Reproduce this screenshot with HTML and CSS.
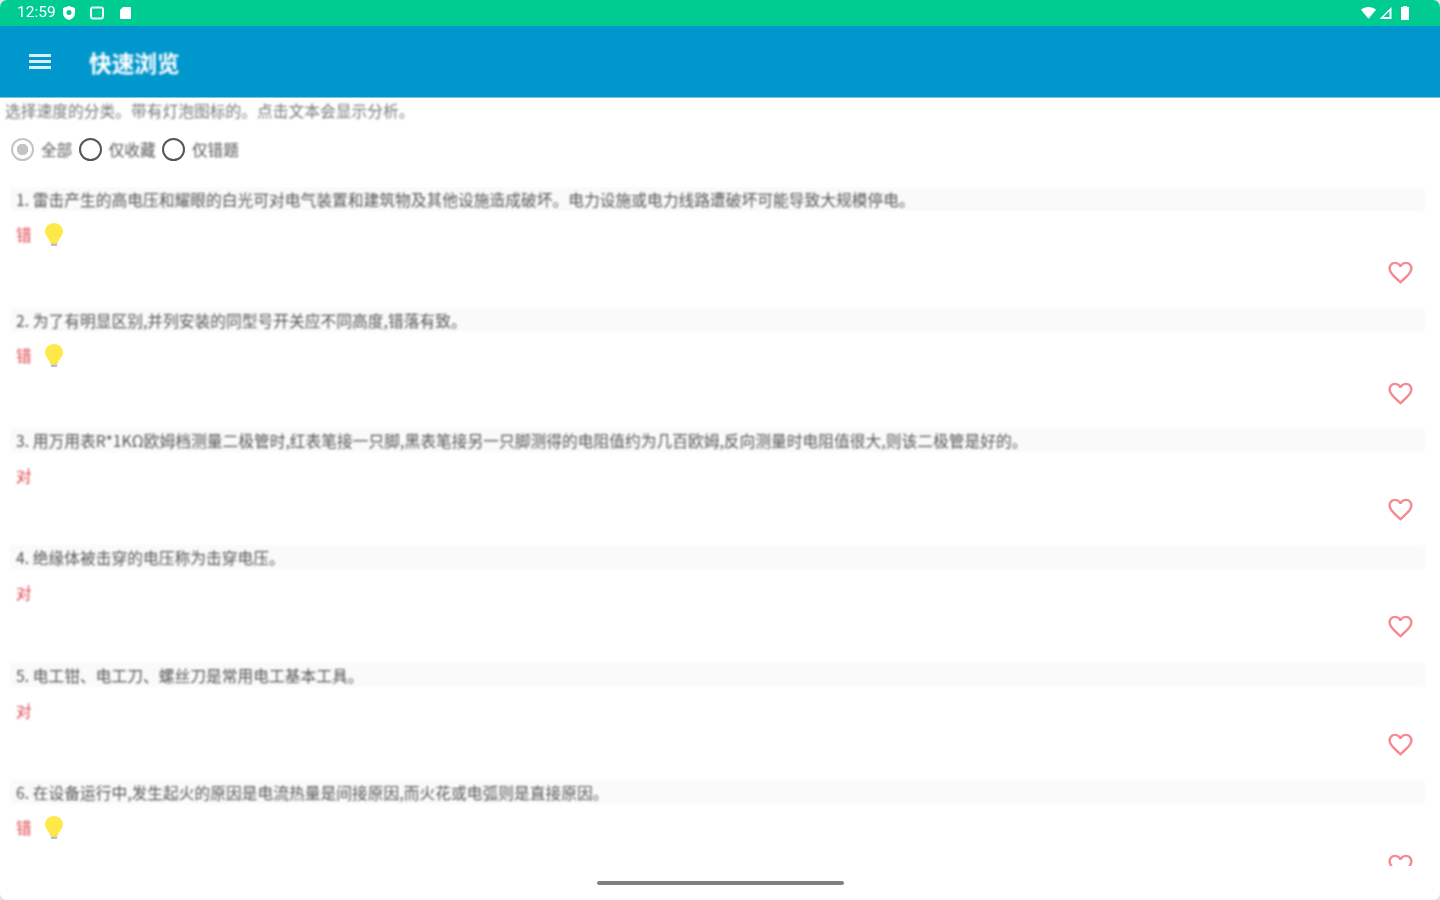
FILE: index.html
```html
<!DOCTYPE html>
<html lang="zh-CN">
<head>
<meta charset="utf-8">
<title>快速浏览</title>
<link rel="stylesheet" href="styles.css">
</head>
<body>
<svg class="defs" width="0" height="0" aria-hidden="true">
  <defs>
    <symbol id="heart" viewBox="0 0 24 24"><path d="M16.5 3c-1.74 0-3.41.81-4.5 2.09C10.91 3.81 9.24 3 7.5 3 4.42 3 2 5.42 2 8.5c0 3.78 3.4 6.86 8.55 11.54L12 21.35l1.45-1.32C18.6 15.36 22 12.28 22 8.5 22 5.42 19.58 3 16.5 3zm-4.4 15.55l-.1.1-.1-.1C7.14 14.24 4 11.39 4 8.5 4 6.5 5.5 5 7.5 5c1.54 0 3.04.99 3.57 2.36h1.87C13.46 5.99 14.96 5 16.5 5c2 0 3.5 1.5 3.5 3.5 0 2.89-3.14 5.74-7.9 10.05z"/></symbol>
    <symbol id="bulb" viewBox="0 0 18 24"><path class="bulb-base" d="M6 20h6v3H6z"/><path class="bulb-glass" d="M9 0C4 0 0 3.8 0 8.6c0 3.6 2.4 5.4 3.8 7.6.8 1.300 1.200 2.800 1.700 4.300h7c.5-1.500.9-3 1.700-4.300C15.600 14 18 12.200 18 8.600 18 3.800 14 0 9 0z"/></symbol>
  </defs>
</svg>
<div class="screen">
  <header class="status">
    <div class="status-left">
      <span class="clock">12:59</span>
      <svg class="si" viewBox="0 0 16 16"><path class="white" d="M8 1l6 2v5c0 3.500-2.500 6-6 7-3.500-1-6-3.500-6-7V3z"/><circle class="green" cx="8" cy="7.500" r="2.500"/></svg>
      <svg class="si si-gap" viewBox="0 0 16 16"><rect class="ring" x="2" y="2.500" width="12" height="11" rx="2"/></svg>
      <svg class="si si-gap" viewBox="0 0 16 16"><path class="white" d="M6 2h7a1 1 0 0 1 1 1v10a1 1 0 0 1-1 1H4a1 1 0 0 1-1-1V5z"/></svg>
    </div>
    <div class="status-right">
      <svg class="sr" viewBox="0 0 16 14"><path class="white" d="M0 3.500C4.500-.5 11.500-.5 16 3.500L8 13z"/></svg>
      <svg class="sr" viewBox="0 0 14 14"><path class="white" d="M13 1v12H1zM11 5l-6 6h6z"/></svg>
      <svg class="batt" viewBox="0 0 10 14"><path class="white" d="M3 0h4v1h2v13H1V1h2z"/></svg>
    </div>
  </header>
  <div class="toolbar">
    <svg class="menu" viewBox="0 0 22 18"><path class="white" d="M0 1h22v3H0zM0 7h22v3H0zM0 13h22v3H0z"/></svg>
    <h1 class="title">快速浏览</h1>
  </div>
  <main class="content">
    <p class="intro">选择速度的分类。带有灯泡图标的。点击文本会显示分析。</p>
    <div class="radios">
      <span class="radio radio-on"></span><span class="radio-label">全部</span>
      <span class="radio"></span><span class="radio-label">仅收藏</span>
      <span class="radio"></span><span class="radio-label">仅错题</span>
    </div>
    <div class="list">
      <article class="item item-bulb">
        <p class="q">1. 雷击产生的高电压和耀眼的白光可对电气装置和建筑物及其他设施造成破坏。电力设施或电力线路遭破坏可能导致大规模停电。</p>
        <div class="a"><span class="ans">错</span><svg class="bulb"><use href="#bulb"/></svg></div>
        <svg class="heart"><use href="#heart"/></svg>
      </article>
      <article class="item item-bulb">
        <p class="q">2. 为了有明显区别,并列安装的同型号开关应不同高度,错落有致。</p>
        <div class="a"><span class="ans">错</span><svg class="bulb"><use href="#bulb"/></svg></div>
        <svg class="heart"><use href="#heart"/></svg>
      </article>
      <article class="item">
        <p class="q">3. 用万用表R*1KΩ欧姆档测量二极管时,红表笔接一只脚,黑表笔接另一只脚测得的电阻值约为几百欧姆,反向测量时电阻值很大,则该二极管是好的。</p>
        <div class="a"><span class="ans">对</span></div>
        <svg class="heart"><use href="#heart"/></svg>
      </article>
      <article class="item">
        <p class="q">4. 绝缘体被击穿的电压称为击穿电压。</p>
        <div class="a"><span class="ans">对</span></div>
        <svg class="heart"><use href="#heart"/></svg>
      </article>
      <article class="item">
        <p class="q">5. 电工钳、电工刀、螺丝刀是常用电工基本工具。</p>
        <div class="a"><span class="ans">对</span></div>
        <svg class="heart"><use href="#heart"/></svg>
      </article>
      <article class="item item-bulb">
        <p class="q">6. 在设备运行中,发生起火的原因是电流热量是间接原因,而火花或电弧则是直接原因。</p>
        <div class="a"><span class="ans">错</span><svg class="bulb"><use href="#bulb"/></svg></div>
        <svg class="heart"><use href="#heart"/></svg>
      </article>
    </div>
  </main>
  <footer class="nav"><span class="home"></span></footer>
</div>
</body>
</html>
```
FILE: styles.css
```css
* { box-sizing: border-box; }
html, body { margin: 0; height: 100%; overflow: hidden; background: #e4e4e4; }
body { font-family: "Noto Sans CJK SC", "Noto Sans", sans-serif; color: #333; }
p, h1 { margin: 0; font-weight: 400; }
.defs { display: block; height: 0; }

.screen { width: 1440px; height: 900px; display: flex; flex-direction: column; background: #fff; overflow: hidden; border-radius: 7px; }

.status { height: 26px; flex: none; background: #00cc92; display: flex; justify-content: space-between; align-items: center; padding: 0 30px 0 17px; }
.status-left, .status-right { display: flex; align-items: center; filter: blur(.7px); }
.clock { font: 15.500px/1 Roboto, sans-serif; color: #fff; margin-right: 5px; }
.si { width: 16px; height: 16px; display: block; }
.si-gap { margin-left: 12px; }
.sr { width: 15px; height: 14px; margin-right: 2px; display: block; }
.batt { width: 10px; height: 14px; margin-left: 5px; display: block; }
.white { fill: #fff; }
.green { fill: #00cc92; }
.ring { fill: none; stroke: #e6fbf3; stroke-width: 2; }

.toolbar { height: 72px; flex: none; background: #0097cc; display: flex; align-items: center; padding: 0 0 0 29px; border-bottom: 1px solid #7cc5e4; }
.menu { width: 22px; height: 18px; display: block; margin-top: 1px; filter: blur(.6px); opacity: .85; }
.title { font-size: 22.700px; font-weight: 700; line-height: 1; color: #fff; margin: 3px 0 0 38px; filter: blur(.8px); }

.content { flex: 1; min-height: 0; display: flex; flex-direction: column; overflow: hidden; }
.intro { font-size: 15.750px; line-height: 24px; padding: 1px 0 0 5px; color: #777; filter: blur(.9px); }

.radios { display: flex; align-items: center; height: 28px; margin-top: 12px; padding-left: 11px; }
.radio { width: 23px; height: 23px; border: 2px solid #555; border-radius: 50%; flex: none; filter: blur(.5px); }
.radio-on { border-color: #c4c4c4; background: radial-gradient(circle, #c4c4c4 0 5.500px, transparent 6px); }
.radio-label { font-size: 15.600px; line-height: 24px; color: #555; margin: 0 6.500px 0 7px; filter: blur(.8px); }

.list { flex: 1; min-height: 0; margin-top: 24px; padding: 0 15px 0 10px; overflow: hidden; display: flex; flex-direction: column; }
.item { height: 117.300px; flex: none; display: flex; flex-direction: column; }
.item-bulb { height: 120.500px; }
.q { height: 24px; flex: none; background: #fafafa; padding: 1px 0 0 6px; font-size: 15.750px; line-height: 24px; color: #555; white-space: nowrap; }
.q, .ans { filter: blur(.8px); }
.a { display: flex; align-items: center; height: 26px; margin-top: 10px; padding-left: 6px; }
.ans { font-size: 15.600px; line-height: 24px; color: #e0454f; }
.bulb { width: 18px; height: 24px; margin: 2px 0 0 13px; filter: blur(.6px); }
.bulb-glass { fill: #ffe94a; }
.bulb-base { fill: #b9bdd6; }
.heart { width: 29px; height: 29px; fill: #f58a93; align-self: flex-end; margin: 7px 10px 0 0; flex: none; filter: blur(.6px); }
.item-bulb .heart { margin-top: 11px; }

.nav { height: 34px; flex: none; display: flex; justify-content: center; padding-top: 15px; }
.home { display: block; width: 247px; height: 4px; background: #808080; border-radius: 2px; filter: blur(.4px); }
```
